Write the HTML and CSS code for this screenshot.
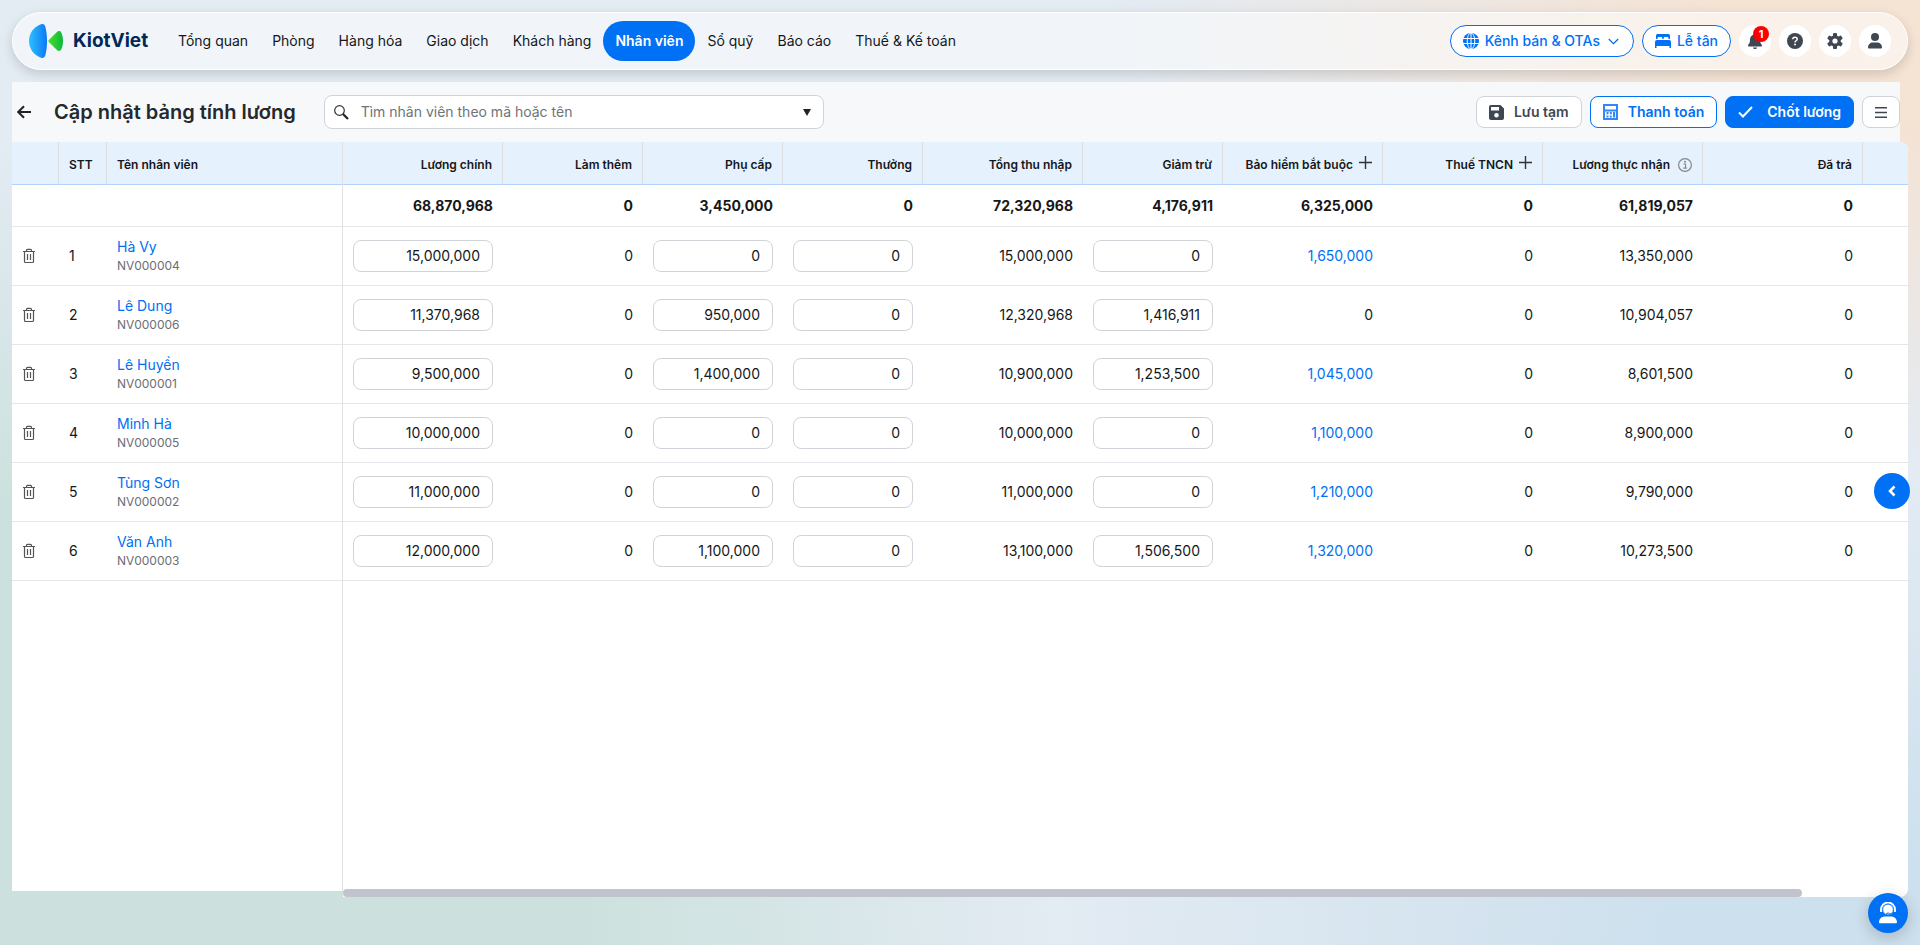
FILE: index.html
```html
<!DOCTYPE html>
<html lang="vi">
<head>
    <meta charset="UTF-8">
    <meta name="viewport" content="width=device-width, initial-scale=1.0">
    <title>Cập nhật bảng tính lương</title>
    <link rel="stylesheet" href="styles.css">
</head>
<body>
    <svg class="sprite" aria-hidden="true">
        <symbol id="icon-trash" viewBox="0 0 14 16">
            <path d="M1 3.5h12M4.5 3.5v-1.2a1 1 0 0 1 1-1h3a1 1 0 0 1 1 1v1.2M2.5 3.5v10a1 1 0 0 0 1 1h7a1 1 0 0 0 1-1v-10M5.5 6v6M8.5 6v6" fill="none" stroke="#555" stroke-width="1.2"/>
        </symbol>
        <symbol id="icon-plus" viewBox="0 0 12 12">
            <path d="M6 0v12M0 6h12" fill="none" stroke="#333" stroke-width="1.3"/>
        </symbol>
    </svg>

    <header class="header">
        <a class="logo" href="#">
            <svg width="34" height="34" viewBox="0 0 34 34" aria-hidden="true">
                <defs>
                    <linearGradient id="logoBlue" x1="0" x2="1">
                        <stop offset="0" stop-color="#2fc0ff"/>
                        <stop offset="1" stop-color="#0a78f5"/>
                    </linearGradient>
                    <linearGradient id="logoGreen" x1="0" x2="1">
                        <stop offset="0" stop-color="#48dd2c"/>
                        <stop offset="1" stop-color="#0cb83a"/>
                    </linearGradient>
                </defs>
                <path d="M12 .3C14 -.4 15.600 .4 16.300 2.500 18.600 11.500 18.600 22.500 16.300 31.500 15.600 33.600 14 34.400 12 33.700 4.500 31 0 24.500 0 17S4.500 3 12 .3z" fill="url(#logoBlue)"/>
                <path d="M19.800 16 28.200 7.800C29.500 6.600 31.400 6.900 32.200 8.500 34.600 13.500 34.600 20.500 32.200 25.500 31.400 27.100 29.500 27.400 28.200 26.200L19.800 18C19.200 17.400 19.200 16.600 19.800 16z" fill="url(#logoGreen)"/>
            </svg>
            <span>KiotViet</span>
        </a>
        <nav class="nav">
            <a href="#">Tổng quan</a>
            <a href="#">Phòng</a>
            <a href="#">Hàng hóa</a>
            <a href="#">Giao dịch</a>
            <a href="#">Khách hàng</a>
            <a href="#" class="active">Nhân viên</a>
            <a href="#">Sổ quỹ</a>
            <a href="#">Báo cáo</a>
            <a href="#">Thuế &amp; Kế toán</a>
        </nav>
        <div class="header-right">
            <button type="button" class="pill">
                <svg width="16" height="16" viewBox="0 0 16 16" aria-hidden="true">
                    <circle cx="8" cy="8" r="8" fill="#0070f4"/>
                    <path d="M8 0v16M0 5.500h16M0 10.500h16" stroke="#fff" fill="none"/>
                    <ellipse cx="8" cy="8" rx="3.800" ry="8" stroke="#fff" fill="none"/>
                </svg>
                Kênh bán &amp; OTAs
                <svg class="chevron" width="11" height="7" viewBox="0 0 11 7" aria-hidden="true">
                    <path d="M.8 1l4.700 4.700L10.200 1" fill="none" stroke="#0070f4" stroke-width="1.300"/>
                </svg>
            </button>
            <button type="button" class="pill">
                <svg width="16" height="14" viewBox="0 0 16 14" aria-hidden="true">
                    <path d="M1 5V1.500A1.500 1.500 0 0 1 2.500 0h11A1.500 1.500 0 0 1 15 1.500V5h-1.500V4a1 1 0 0 0-1-1H9.700a1 1 0 0 0-1 1v1H7.300V4a1 1 0 0 0-1-1H3.500a1 1 0 0 0-1 1v1z" fill="#0070f4"/>
                    <path d="M0 8a2 2 0 0 1 2-2h12a2 2 0 0 1 2 2v6h-1.500v-2h-13v2H0z" fill="#0070f4"/>
                </svg>
                Lễ tân
            </button>
            <button type="button" class="circle" aria-label="Thông báo">
                <svg width="14" height="16" viewBox="0 0 14 16" aria-hidden="true">
                    <path d="M7 0a1 1 0 0 1 1 1v.6c2.300.5 4 2.400 4 4.900 0 3 .6 4.100 1.700 5.200.6.700.2 1.800-.8 1.800H1.100c-1 0-1.400-1.100-.8-1.800C1.400 10.600 2 9.500 2 6.500 2 4 3.700 2.100 6 1.600V1a1 1 0 0 1 1-1zM5 14.500h4a2 1.500 0 0 1-4 0z" fill="#3f4752"/>
                </svg>
                <span class="badge">1</span>
            </button>
            <button type="button" class="circle" aria-label="Trợ giúp">
                <svg width="16" height="16" viewBox="0 0 16 16" aria-hidden="true">
                    <circle cx="8" cy="8" r="8" fill="#3f4752"/>
                    <path d="M5.800 6.300C5.800 4.900 6.700 4.200 8 4.200s2.200.8 2.200 2c0 1.500-2.200 1.600-2.200 3.200" fill="none" stroke="#fff" stroke-width="1.500"/>
                    <circle cx="8" cy="11.600" r="1" fill="#fff"/>
                </svg>
            </button>
            <button type="button" class="circle" aria-label="Thiết lập">
                <svg width="16" height="16" viewBox="0 0 16 16" aria-hidden="true">
                    <g fill="#3f4752">
                        <rect x="6" y="0" width="4" height="16" rx="1"/>
                        <rect x="6" y="0" width="4" height="16" rx="1" transform="rotate(60 8 8)"/>
                        <rect x="6" y="0" width="4" height="16" rx="1" transform="rotate(120 8 8)"/>
                        <circle cx="8" cy="8" r="5.800"/>
                    </g>
                    <circle cx="8" cy="8" r="2.600" fill="#fff"/>
                </svg>
            </button>
            <button type="button" class="circle" aria-label="Tài khoản">
                <svg width="14" height="16" viewBox="0 0 14 16" aria-hidden="true">
                    <circle cx="7" cy="4" r="4" fill="#3f4752"/>
                    <path d="M0 14.500C0 11.500 2.200 9.500 5 9.500h4c2.800 0 5 2 5 5a1 1 0 0 1-1 1H1a1 1 0 0 1-1-1z" fill="#3f4752"/>
                </svg>
            </button>
        </div>
    </header>

    <main class="main">
        <div class="toolbar">
            <a class="back" href="#" aria-label="Quay lại">
                <svg width="14" height="14" viewBox="0 0 14 14" aria-hidden="true">
                    <path d="M14 7H1.500M7 1.200L1.200 7 7 12.800" fill="none" stroke="#222" stroke-width="2"/>
                </svg>
            </a>
            <h1>Cập nhật bảng tính lương</h1>
            <div class="search">
                <svg width="15" height="15" viewBox="0 0 15 15" aria-hidden="true">
                    <circle cx="5.500" cy="5.500" r="4.800" fill="none" stroke="#333" stroke-width="1.200"/>
                    <path d="M9 9l5 5" stroke="#222" stroke-width="2.200"/>
                </svg>
                <input type="text" placeholder="Tìm nhân viên theo mã hoặc tên" aria-label="Tìm nhân viên">
                <button type="button" aria-label="Mở danh sách">
                    <svg width="8" height="7" viewBox="0 0 8 7" aria-hidden="true"><path d="M0 0h8L4 7z" fill="#222"/></svg>
                </button>
            </div>
            <div class="actions">
                <button type="button" class="btn">
                    <svg width="15" height="15" viewBox="0 0 15 15" aria-hidden="true">
                        <path d="M2 0h9.500L15 3.500V13a2 2 0 0 1-2 2H2a2 2 0 0 1-2-2V2a2 2 0 0 1 2-2zM2 2v3.500h8V2zM7.500 8a2.300 2.300 0 1 0 0 4.600 2.300 2.300 0 0 0 0-4.600z" fill="#3f4752" fill-rule="evenodd"/>
                    </svg>
                    Lưu tạm
                </button>
                <button type="button" class="btn btn-outline">
                    <svg width="15" height="16" viewBox="0 0 15 16" aria-hidden="true">
                        <path d="M0 0h15v16H0zM2 2v3.500h11V2zM2 7.500V14h11V7.500z" fill="#3288f7" fill-rule="evenodd"/>
                        <path d="M3.500 8h2v2.200h-2zM6.800 8h2v2.200h-2zM3.500 11.500h2v2h-2zM6.800 11.500h2v2h-2zM10 8h2.200v5.500H10z" fill="#3288f7"/>
                    </svg>
                    Thanh toán
                </button>
                <button type="button" class="btn btn-primary">
                    <svg width="15" height="12" viewBox="0 0 15 12" aria-hidden="true">
                        <path d="M1 6.500l4 4L14 1" fill="none" stroke="#fff" stroke-width="2"/>
                    </svg>
                    Chốt lương
                </button>
                <button type="button" class="btn btn-menu" aria-label="Tùy chọn">
                    <svg width="12" height="11" viewBox="0 0 12 11" aria-hidden="true">
                        <path d="M0 .8h12M0 5.500h12M0 10.200h12" stroke="#3f4752" stroke-width="1.400"/>
                    </svg>
                </button>
            </div>
        </div>

        <div class="grid">
            <div class="grid-locked">
                <table>
                    <colgroup>
                        <col class="col-delete"><col class="col-stt"><col>
                    </colgroup>
                    <thead>
                        <tr><th></th><th>STT</th><th>Tên nhân viên</th></tr>
                    </thead>
                    <tbody>
                        <tr class="summary"><td></td><td></td><td></td></tr>
                        <tr>
                            <td><button type="button" class="delete" aria-label="Xóa"><svg><use href="#icon-trash"/></svg></button></td>
                            <td>1</td>
                            <td><a href="#">Hà Vy</a><small>NV000004</small></td>
                        </tr>
                        <tr>
                            <td><button type="button" class="delete" aria-label="Xóa"><svg><use href="#icon-trash"/></svg></button></td>
                            <td>2</td>
                            <td><a href="#">Lê Dung</a><small>NV000006</small></td>
                        </tr>
                        <tr>
                            <td><button type="button" class="delete" aria-label="Xóa"><svg><use href="#icon-trash"/></svg></button></td>
                            <td>3</td>
                            <td><a href="#">Lê Huyền</a><small>NV000001</small></td>
                        </tr>
                        <tr>
                            <td><button type="button" class="delete" aria-label="Xóa"><svg><use href="#icon-trash"/></svg></button></td>
                            <td>4</td>
                            <td><a href="#">Minh Hà</a><small>NV000005</small></td>
                        </tr>
                        <tr>
                            <td><button type="button" class="delete" aria-label="Xóa"><svg><use href="#icon-trash"/></svg></button></td>
                            <td>5</td>
                            <td><a href="#">Tùng Sơn</a><small>NV000002</small></td>
                        </tr>
                        <tr>
                            <td><button type="button" class="delete" aria-label="Xóa"><svg><use href="#icon-trash"/></svg></button></td>
                            <td>6</td>
                            <td><a href="#">Văn Anh</a><small>NV000003</small></td>
                        </tr>
                    </tbody>
                </table>
            </div>

            <div class="grid-content">
                <table>
                    <colgroup>
                        <col class="col-wide"><col class="col-normal"><col class="col-normal"><col class="col-normal"><col class="col-wide"><col class="col-normal"><col class="col-wide"><col class="col-wide"><col class="col-wide"><col class="col-wide"><col>
                    </colgroup>
                    <thead>
                        <tr>
                            <th>Lương chính</th>
                            <th>Làm thêm</th>
                            <th>Phụ cấp</th>
                            <th>Thưởng</th>
                            <th>Tổng thu nhập</th>
                            <th>Giảm trừ</th>
                            <th>Bảo hiểm bắt buộc<button type="button" class="add" aria-label="Thêm bảo hiểm"><svg><use href="#icon-plus"/></svg></button></th>
                            <th>Thuế TNCN<button type="button" class="add" aria-label="Thêm thuế"><svg><use href="#icon-plus"/></svg></button></th>
                            <th>Lương thực nhận
                                <svg class="info" width="14" height="14" viewBox="0 0 14 14" aria-hidden="true">
                                    <circle cx="7" cy="7" r="6.400" fill="none" stroke="#85898f" stroke-width="1.200"/>
                                    <path d="M5.500 6h2v4M5.300 10.200h3.600" fill="none" stroke="#85898f" stroke-width="1.200"/>
                                    <circle cx="7" cy="3.800" r="1" fill="#85898f"/>
                                </svg>
                            </th>
                            <th>Đã trả</th>
                            <th></th>
                        </tr>
                    </thead>
                    <tbody>
                        <tr class="summary">
                            <td>68,870,968</td><td>0</td><td>3,450,000</td><td>0</td><td>72,320,968</td><td>4,176,911</td><td>6,325,000</td><td>0</td><td>61,819,057</td><td>0</td><td></td>
                        </tr>
                        <tr>
                            <td><input type="text" value="15,000,000" aria-label="Lương chính"></td>
                            <td>0</td>
                            <td><input type="text" value="0" aria-label="Phụ cấp"></td>
                            <td><input type="text" value="0" aria-label="Thưởng"></td>
                            <td>15,000,000</td>
                            <td><input type="text" value="0" aria-label="Giảm trừ"></td>
                            <td><a href="#">1,650,000</a></td>
                            <td>0</td><td>13,350,000</td><td>0</td><td></td>
                        </tr>
                        <tr>
                            <td><input type="text" value="11,370,968" aria-label="Lương chính"></td>
                            <td>0</td>
                            <td><input type="text" value="950,000" aria-label="Phụ cấp"></td>
                            <td><input type="text" value="0" aria-label="Thưởng"></td>
                            <td>12,320,968</td>
                            <td><input type="text" value="1,416,911" aria-label="Giảm trừ"></td>
                            <td>0</td>
                            <td>0</td><td>10,904,057</td><td>0</td><td></td>
                        </tr>
                        <tr>
                            <td><input type="text" value="9,500,000" aria-label="Lương chính"></td>
                            <td>0</td>
                            <td><input type="text" value="1,400,000" aria-label="Phụ cấp"></td>
                            <td><input type="text" value="0" aria-label="Thưởng"></td>
                            <td>10,900,000</td>
                            <td><input type="text" value="1,253,500" aria-label="Giảm trừ"></td>
                            <td><a href="#">1,045,000</a></td>
                            <td>0</td><td>8,601,500</td><td>0</td><td></td>
                        </tr>
                        <tr>
                            <td><input type="text" value="10,000,000" aria-label="Lương chính"></td>
                            <td>0</td>
                            <td><input type="text" value="0" aria-label="Phụ cấp"></td>
                            <td><input type="text" value="0" aria-label="Thưởng"></td>
                            <td>10,000,000</td>
                            <td><input type="text" value="0" aria-label="Giảm trừ"></td>
                            <td><a href="#">1,100,000</a></td>
                            <td>0</td><td>8,900,000</td><td>0</td><td></td>
                        </tr>
                        <tr>
                            <td><input type="text" value="11,000,000" aria-label="Lương chính"></td>
                            <td>0</td>
                            <td><input type="text" value="0" aria-label="Phụ cấp"></td>
                            <td><input type="text" value="0" aria-label="Thưởng"></td>
                            <td>11,000,000</td>
                            <td><input type="text" value="0" aria-label="Giảm trừ"></td>
                            <td><a href="#">1,210,000</a></td>
                            <td>0</td><td>9,790,000</td><td>0</td><td></td>
                        </tr>
                        <tr>
                            <td><input type="text" value="12,000,000" aria-label="Lương chính"></td>
                            <td>0</td>
                            <td><input type="text" value="1,100,000" aria-label="Phụ cấp"></td>
                            <td><input type="text" value="0" aria-label="Thưởng"></td>
                            <td>13,100,000</td>
                            <td><input type="text" value="1,506,500" aria-label="Giảm trừ"></td>
                            <td><a href="#">1,320,000</a></td>
                            <td>0</td><td>10,273,500</td><td>0</td><td></td>
                        </tr>
                    </tbody>
                </table>
                <div class="scrollbar"><div class="thumb"></div></div>
            </div>
        </div>
    </main>

    <button type="button" class="side-toggle" aria-label="Mở bảng bên">
        <svg width="8" height="12" viewBox="0 0 8 12" aria-hidden="true">
            <path d="M6.500 1.500L2 6l4.500 4.500" fill="none" stroke="#fff" stroke-width="2.600"/>
        </svg>
    </button>
    <button type="button" class="support" aria-label="Hỗ trợ">
        <svg width="20" height="22" viewBox="0 0 20 22" aria-hidden="true">
            <path d="M1 20.500C1 16.500 4 14.500 7 14.500h6c3 0 6 2 6 6 0 .5-.4.800-.8.800H1.800c-.4 0-.8-.3-.8-.8z" fill="#fff"/>
            <circle cx="10" cy="7.500" r="5.500" fill="#fff"/>
            <path d="M3 10V7.500a7 7 0 0 1 14 0V10" fill="none" stroke="#fff" stroke-width="1.800"/>
            <circle cx="10" cy="7.500" r="5.300" fill="none" stroke="#0070f4" stroke-width=".8"/>
            <path d="M8 12c1-1.500 3-1 5 0" fill="none" stroke="#0070f4" stroke-width="1"/>
        </svg>
    </button>
</body>
</html>
```

FILE: styles.css
```css
* { box-sizing: border-box; }
body {
    font-family: Inter, Roboto, sans-serif;
    font-size: 14px;
    line-height: 20px;
    color: #15171a;
    margin: 0;
    padding: 12px 12px 48px;
    min-height: 100vh;
    display: flex;
    flex-direction: column;
    gap: 12px;
    background:
        radial-gradient(ellipse 42% 50% at 100% 0, #f5e3d4 25%, rgba(245, 227, 212, 0) 100%),
        radial-gradient(ellipse 55% 85% at 0 100%, #cce1dd 55%, rgba(204, 225, 221, 0) 100%),
        radial-gradient(ellipse 40% 50% at 95% 100%, #cde0ed 20%, rgba(205, 224, 237, 0) 100%),
        #e3ebf3;
}
a { color: #0070f4; text-decoration: none; }
button, input { font: inherit; }
button { cursor: pointer; padding: 0; }
svg { flex-shrink: 0; }
.sprite { position: absolute; width: 0; height: 0; }

/* Header */
.header {
    display: flex;
    align-items: center;
    height: 58px;
    padding: 0 16px;
    border: 1px solid #fff;
    border-radius: 29px;
    background-color: rgba(255, 255, 255, 0.5);
    box-shadow: 0 4px 12px rgba(0, 0, 0, 0.15);
}
.logo {
    display: flex;
    align-items: center;
    gap: 10px;
    width: 137px;
    color: #00285a;
    font-size: 19px;
    font-weight: 700;
}
.nav { display: flex; flex: 1; }
.nav a {
    padding: 10px 12px;
    border-radius: 20px;
    color: #15171a;
    white-space: nowrap;
}
.nav .active {
    background-color: #0070f4;
    color: #fff;
    font-weight: 600;
}
.header-right { display: flex; gap: 8px; }
.pill {
    display: flex;
    align-items: center;
    gap: 6px;
    height: 32px;
    padding: 0 12px;
    border: 1px solid #0070f4;
    border-radius: 16px;
    background-color: #fff;
    color: #0070f4;
    font-weight: 500;
    white-space: nowrap;
}
.chevron { margin: 0 2px; }
.circle {
    position: relative;
    display: flex;
    align-items: center;
    justify-content: center;
    width: 32px;
    height: 32px;
    border: none;
    border-radius: 50%;
    background-color: #fff;
}
.badge {
    position: absolute;
    top: 1px;
    right: 2px;
    width: 16px;
    height: 16px;
    border-radius: 8px;
    background-color: #f00;
    color: #fff;
    font-size: 11px;
    font-weight: 700;
    line-height: 16px;
    text-align: center;
}

/* Toolbar */
.main {
    display: flex;
    flex-direction: column;
    flex: 1;
}
.toolbar {
    display: flex;
    align-items: center;
    height: 60px;
    margin-right: 8px;
    padding-left: 5px;
    background-color: #f7f8fa;
}
.back { display: flex; width: 37px; }
h1 {
    margin: 0 28px 0 0;
    color: #25282c;
    font-size: 20px;
    font-weight: 600;
    line-height: 28px;
    white-space: nowrap;
}
.search {
    display: flex;
    align-items: center;
    gap: 12px;
    width: 500px;
    height: 34px;
    padding: 0 12px 0 9px;
    border: 1px solid #d0d3d8;
    border-radius: 8px;
    background-color: #fff;
}
.search input {
    flex: 1;
    min-width: 0;
    padding: 0;
    border: none;
    outline: none;
    background: none;
}
.search input::placeholder { color: #707377; }
.search button {
    display: flex;
    border: none;
    background: none;
}
.actions {
    display: flex;
    gap: 8px;
    margin-left: auto;
}
.btn {
    display: flex;
    align-items: center;
    justify-content: center;
    gap: 10px;
    height: 32px;
    padding: 0 12px;
    border: 1px solid #d0d3d8;
    border-radius: 8px;
    background-color: #fff;
    color: #3f4752;
    font-weight: 600;
    white-space: nowrap;
}
.btn-outline { border-color: #0070f4; color: #0070f4; }
.btn-primary {
    gap: 14px;
    border-color: #0070f4;
    background-color: #0070f4;
    color: #fff;
}
.btn-menu { width: 38px; }

/* Payroll grid */
.grid {
    display: flex;
    flex: 1;
}
.grid-locked {
    width: 331px;
    margin-bottom: 6px;
    border-right: 1px solid #e3e5e8;
    background-color: #fff;
}
.grid-content {
    display: flex;
    flex: 1;
    flex-direction: column;
    min-width: 0;
    overflow: hidden;
    border-radius: 0 8px 8px 0;
    background-color: #fff;
}
table {
    width: 100%;
    table-layout: fixed;
    border-collapse: separate;
    border-spacing: 0;
}
.col-delete { width: 47px; }
.col-stt { width: 48px; }
.col-normal { width: 140px; }
.col-wide { width: 160px; }
th {
    height: 43px;
    padding: 4px 10px 0;
    border-right: 1px solid #dcdee1;
    border-bottom: 1px solid #b0d3fb;
    background-color: #e5f1fd;
    font-size: 12px;
    font-weight: 600;
    text-align: left;
    white-space: nowrap;
}
th:last-child { border-right: none; }
.grid-locked { border-color: #dfe1e4; }
td {
    height: 59px;
    padding: 0 10px;
    border-bottom: 1px solid #e6e7ea;
}
.summary td { height: 42px; font-weight: 700; }
.grid-content th, .grid-content td { text-align: right; }
.grid-locked td:first-child { padding-right: 0; }
td small {
    display: block;
    color: #6b6e73;
    font-size: 12px;
    line-height: 18px;
}
td input {
    display: block;
    width: 100%;
    height: 32px;
    padding: 0 12px 1px;
    border: 1px solid #d0d3d8;
    border-radius: 8px;
    color: inherit;
    text-align: right;
}
.delete {
    display: block;
    border: none;
    background: none;
}
.delete svg { display: block; width: 14px; height: 16px; }
.add {
    margin-left: 6px;
    border: none;
    background: none;
}
.add svg { display: block; width: 13px; height: 13px; }
.info { margin-left: 5px; vertical-align: text-bottom; }
.scrollbar { margin-top: auto; }
.thumb {
    width: 93.2%;
    height: 8px;
    border-radius: 4px;
    background-color: #c1c4cc;
}

/* Floating buttons */
.side-toggle, .support {
    position: fixed;
    display: flex;
    align-items: center;
    justify-content: center;
    border: none;
    border-radius: 50%;
    background-color: #0070f4;
}
.side-toggle {
    top: 50%;
    right: 10px;
    width: 36px;
    height: 36px;
}
.support {
    right: 12px;
    bottom: 12px;
    width: 40px;
    height: 40px;
    box-shadow: 0 4px 16px rgba(0, 0, 0, 0.2);
}
```
